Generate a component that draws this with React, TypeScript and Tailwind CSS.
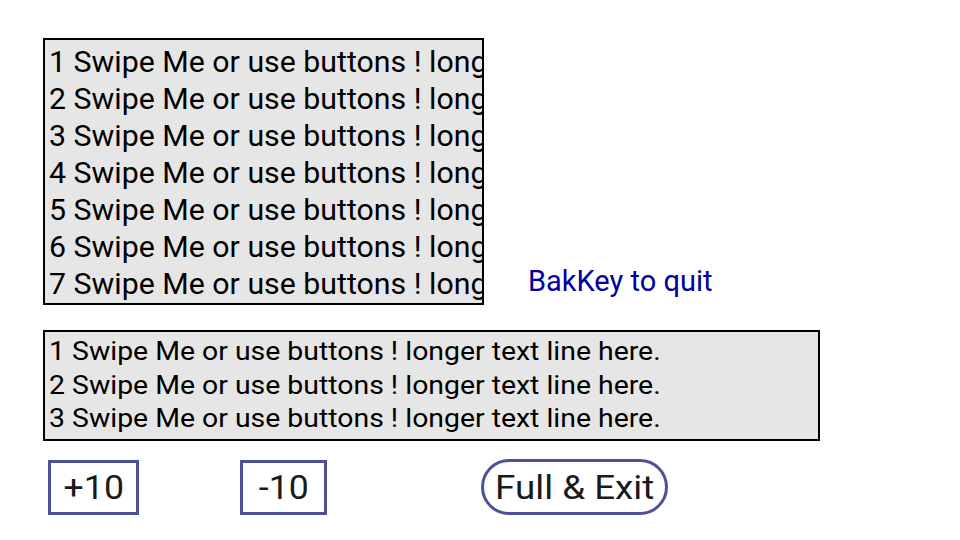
import React from 'react';

const lines = [1, 2, 3, 4, 5, 6, 7];
const text = 'Swipe Me or use buttons ! longer text line here.';

const App: React.FC = () => {
    return (
        <div className="w-[960px] h-[540px] bg-white pt-[38px] pl-[43px] font-['Roboto',sans-serif] text-black">
            {/* top list + quit hint */}
            <div className="flex items-end">
                <div className="w-[441px] h-[267px] border-2 border-black bg-[#e6e6e6] overflow-hidden pl-[4px] pt-[3px] text-[30px] leading-[37px] whitespace-nowrap">
                    {lines.map(n => (
                        <div key={n} className="origin-left scale-x-[1.01]">{n} {text}</div>
                    ))}
                </div>
                <div className="ml-[44px] mb-[5px] text-[29px] leading-[37px] text-[#0000a0] whitespace-nowrap">BakKey to quit</div>
            </div>

            {/* lower list */}
            <div className="mt-[25px] w-[777px] h-[111px] border-2 border-black bg-[#e6e6e6] overflow-hidden pl-[4px] pt-[3px] text-[25px] leading-[33.5px] whitespace-nowrap">
                {lines.slice(0, 3).map(n => (
                    <div key={n} className="origin-left scale-x-[1.136]">{n} {text}</div>
                ))}
            </div>

            {/* buttons */}
            <div className="mt-[18px] flex items-center text-[34px] text-[#1a1a1a]">
                <div className="ml-[5px] w-[91px] h-[55px] border-[3px] border-[#4f5198] flex items-center justify-center">
                    <span className="scale-x-[1.05]">+10</span>
                </div>
                <div className="ml-[101px] w-[87px] h-[55px] border-[3px] border-[#4f5198] flex items-center justify-center">
                    <span className="scale-x-[1.05]">-10</span>
                </div>
                <div className="ml-[154px] w-[187px] h-[56px] border-[3px] border-[#4f5198] rounded-full flex items-center justify-center">
                    <span className="scale-x-[1.08] whitespace-nowrap">Full &amp; Exit</span>
                </div>
            </div>
        </div>
    );
};

export default App;
